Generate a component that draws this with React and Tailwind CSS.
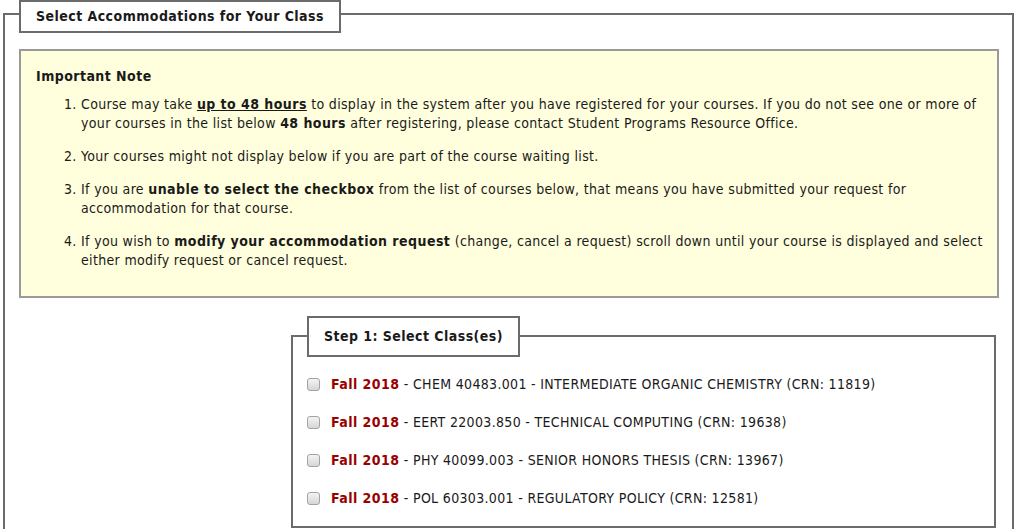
export default function App() {
  const courses = [
    "CHEM 40483.001 - INTERMEDIATE ORGANIC CHEMISTRY (CRN: 11819)",
    "EERT 22003.850 - TECHNICAL COMPUTING (CRN: 19638)",
    "PHY 40099.003 - SENIOR HONORS THESIS (CRN: 13967)",
    "POL 60303.001 - REGULATORY POLICY (CRN: 12581)",
  ];
  return (
    <div
      className="min-h-[529px] bg-white text-[14px] leading-[19px] tracking-[0.33px] text-[#1a1a1a]"
      style={{ fontFamily: '"DejaVu Sans Condensed", "DejaVu Sans", sans-serif' }}
    >
      <div className="mx-[3px] mt-[13px] border-2 border-[#6b6b6b] pl-[14px] pr-[13px] pb-[20px]">
        <div className="-mt-[15px] w-fit border-2 border-[#6b6b6b] bg-white px-[15px] py-[5px] font-bold tracking-[0.45px]">
          Select Accommodations for Your Class
        </div>
        <div className="mt-[16px] border-2 border-[#9a9a9a] bg-[#ffffdd] pl-[15px] pr-[6px] pt-[16px] pb-[26px]">
          <div className="font-bold tracking-[0.45px]">Important Note</div>
          <ol className="mt-[9px] list-decimal pl-[45px] flex flex-col gap-[14px]">
            <li>
              Course may take <span className="font-bold underline tracking-[0.45px]">up to 48 hours</span> to display in the system after you have registered for your courses. If you do not see one or more of your courses in the list below <span className="font-bold tracking-[0.45px]">48 hours</span> after registering, please contact Student Programs Resource Office.
            </li>
            <li>Your courses might not display below if you are part of the course waiting list.</li>
            <li>
              If you are <span className="font-bold tracking-[0.45px]">unable to select the checkbox</span> from the list of courses below, that means you have submitted your request for accommodation for that course.
            </li>
            <li>
              If you wish to <span className="font-bold tracking-[0.45px]">modify your accommodation request</span> (change, cancel a request) scroll down until your course is displayed and select either modify request or cancel request.
            </li>
          </ol>
        </div>
        <div className="mt-[37px] ml-[272px] w-[705px] border-2 border-[#6b6b6b] pl-[14px] pb-[18px]">
          <div className="-mt-[21px] w-fit border-2 border-[#6b6b6b] bg-white px-[15px] py-[9px] font-bold tracking-[0.45px]">
            Step 1: Select Class(es)
          </div>
          <div className="mt-[18px] flex flex-col gap-[19px]">
            {courses.map((c) => (
              <label key={c} className="flex items-center">
                <span className="mr-[11px] h-[13px] w-[13px] rounded-[3px] border border-[#a3a3a3] bg-gradient-to-b from-[#f4f4f4] to-[#d6d6d6]" />
                <span>
                  <span className="font-bold tracking-[0.45px] text-[#990000]">Fall 2018</span> - {c}
                </span>
              </label>
            ))}
          </div>
        </div>
      </div>
    </div>
  );
}
